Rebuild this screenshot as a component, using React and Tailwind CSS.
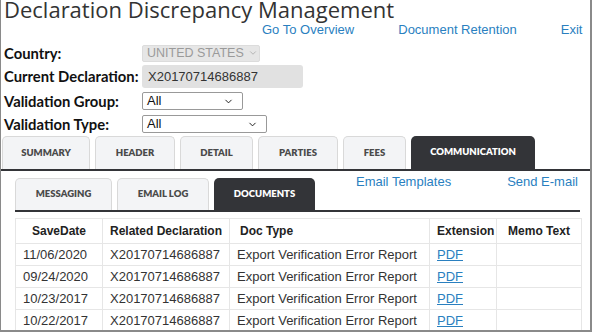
import { ChevronDown } from "lucide-react";

const mainTabs = ["SUMMARY", "HEADER", "DETAIL", "PARTIES", "FEES", "COMMUNICATION"];
const mainW = ["w-[88px]", "w-[80px]", "w-[73px]", "w-[80px]", "w-[63px]", "w-[124px]"];
const subTabs = ["MESSAGING", "EMAIL LOG", "DOCUMENTS"];
const subW = ["w-[97px]", "w-[92px]", "w-[101px]"];

const rows = [
  ["11/06/2020", "X20170714686887"],
  ["09/24/2020", "X20170714686887"],
  ["10/23/2017", "X20170714686887"],
  ["10/22/2017", "X20170714686887"],
];

function Label({ children }) {
  return (
    <div className="w-[138px] shrink-0 font-['Lato'] font-bold text-[14.8px] text-[#111] whitespace-nowrap">
      {children}
    </div>
  );
}

export default function App() {
  return (
    <div className="w-[592px] h-[332px] overflow-hidden bg-white border-l border-r-2 border-b-2 border-[#8a8a8a] font-['Liberation_Sans',Arial,sans-serif]">
      <h1 className="pl-[3px] -mt-[2px] h-[21px] font-['Open_Sans',sans-serif] text-[22px] leading-[22px] text-[#333] whitespace-nowrap">
        Declaration Discrepancy Management
      </h1>

      <div className="flex h-[20px] mt-[1px] items-center text-[13px] text-[#2a7fbf] whitespace-nowrap">
        <a className="ml-[261px]">Go To Overview</a>
        <a className="ml-[44px]">Document Retention</a>
        <a className="ml-[44px]">Exit</a>
      </div>

      <div className="pl-[3px] flex flex-col">
        <div className="flex items-center h-[18px] mt-[4px]">
          <Label>Country:</Label>
          <div className="flex items-center h-[17px] w-[118px] rounded-[2px] bg-[#e6e6e6] border border-[#dcdcdc] pl-[4px] text-[12.5px] text-[#9a9a9a] whitespace-nowrap">
            UNITED STATES
            <ChevronDown size={10} strokeWidth={1.5} className="shrink-0 ml-[4px] text-[#999]" />
          </div>
        </div>
        <div className="flex items-center h-[23px] mt-[3px]">
          <Label>Current Declaration:</Label>
          <div className="flex items-center h-[23px] w-[161px] rounded-[3px] bg-[#e1e1e1] pl-[6px] text-[13px] text-[#333]">
            X20170714686887
          </div>
        </div>
        <div className="flex items-center h-[18px] mt-[4px]">
          <Label>Validation Group:</Label>
          <div className="flex items-center justify-between h-[18px] w-[101px] rounded-[2px] border border-[#999] bg-white pl-[4px] pr-[8px] text-[13px] text-[#111]">
            All
            <ChevronDown size={11} strokeWidth={2} />
          </div>
        </div>
        <div className="flex items-center h-[18px] mt-[5px]">
          <Label>Validation Type:</Label>
          <div className="flex items-center justify-between h-[18px] w-[125px] rounded-[2px] border border-[#999] bg-white pl-[4px] pr-[8px] text-[13px] text-[#111]">
            All
            <ChevronDown size={11} strokeWidth={2} />
          </div>
        </div>
      </div>

      <div className="mt-[3px] flex items-end gap-[5px] pl-[1px] border-b-2 border-[#333438] h-[35px]">
        {mainTabs.map((t, i) => (
          <div
            key={t}
            className={`${mainW[i]} h-[33px] flex items-center justify-center rounded-t-[5px] font-['Lato'] font-extrabold text-[9.5px] ${
              t === "COMMUNICATION"
                ? "bg-[#333438] text-white"
                : "bg-[#f3f4f6] border border-b-0 border-[#d9d9d9] text-[#4a4a4a]"
            }`}
          >
            {t}
          </div>
        ))}
      </div>

      <div className="ml-[14px] mr-[10px] mt-[7px] flex items-end border-b-2 border-[#333438] h-[34px]">
        <div className="flex items-end gap-[5px]">
          {subTabs.map((t, i) => (
            <div
              key={t}
              className={`${subW[i]} h-[32px] flex items-center justify-center rounded-t-[5px] font-['Lato'] font-extrabold text-[9.5px] ${
                t === "DOCUMENTS"
                  ? "bg-[#333438] text-white"
                  : "bg-[#f3f4f6] border border-b-0 border-[#d9d9d9] text-[#4a4a4a]"
              }`}
            >
              {t}
            </div>
          ))}
        </div>
        <div className="self-start flex text-[13px] text-[#2a7fbf] leading-[15px] -mt-[4px] whitespace-nowrap">
          <a className="ml-[41px]">Email Templates</a>
          <a className="ml-[56px]">Send E-mail</a>
        </div>
      </div>

      <table className="ml-[14px] mt-[6px] w-[566px] border-collapse text-[13px] text-[#333] table-fixed">
        <colgroup>
          <col className="w-[87px]" />
          <col className="w-[127px]" />
          <col className="w-[200px]" />
          <col className="w-[67px]" />
          <col className="w-[85px]" />
        </colgroup>
        <thead>
          <tr className="h-[25px] text-[12px] font-bold text-[#222]">
            <th className="border border-[#e6e6e6] text-center">SaveDate</th>
            <th className="border border-[#e6e6e6] text-center">Related Declaration</th>
            <th className="border border-[#e6e6e6] text-left pl-[10px]">Doc Type</th>
            <th className="border border-[#e6e6e6] text-left pl-[7px]">Extension</th>
            <th className="border border-[#e6e6e6] text-center">Memo Text</th>
          </tr>
        </thead>
        <tbody>
          {rows.map(([d, r]) => (
            <tr key={d} className="h-[22px]">
              <td className="border border-[#e6e6e6] pl-[7px]">{d}</td>
              <td className="border border-[#e6e6e6] pl-[7px]">{r}</td>
              <td className="border border-[#e6e6e6] pl-[7px] whitespace-nowrap">Export Verification Error Report</td>
              <td className="border border-[#e6e6e6] pl-[7px]">
                <a className="text-[#2a7fbf] underline">PDF</a>
              </td>
              <td className="border border-[#e6e6e6]"></td>
            </tr>
          ))}
        </tbody>
      </table>
    </div>
  );
}
